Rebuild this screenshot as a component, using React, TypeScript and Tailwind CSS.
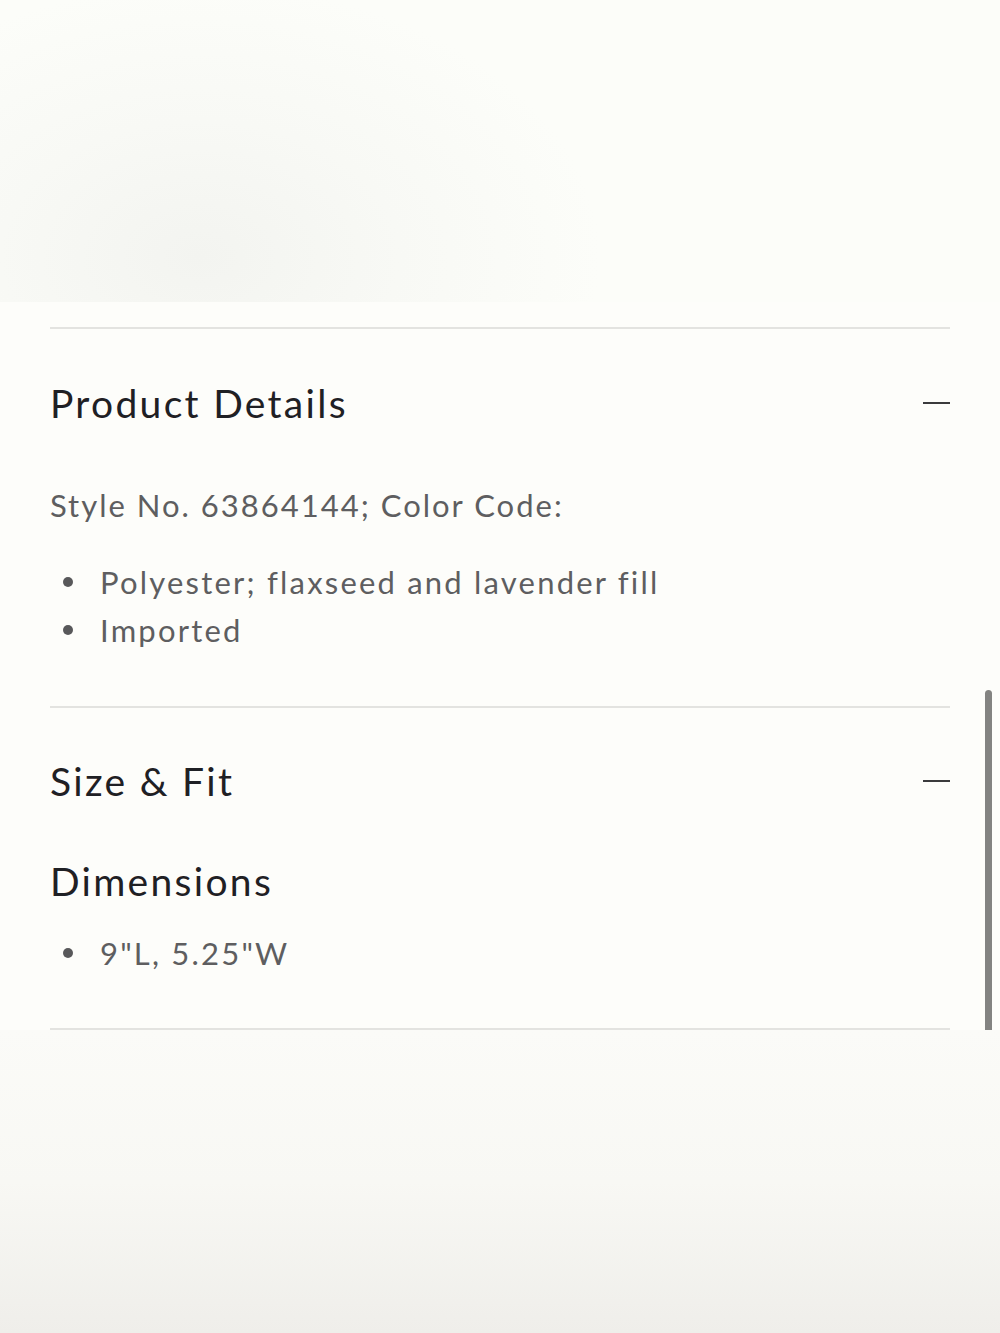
const details = ["Polyester; flaxseed and lavender fill", "Imported"];
const dims = ['9"L, 5.25"W'];

function Bullets({ items }: { items: string[] }) {
  return (
    <ul className="flex flex-col">
      {items.map((item) => (
        <li key={item} className="flex items-center h-[48px]">
          <span className="w-[10px] h-[10px] rounded-full bg-[#58585a] ml-[13px] mr-[27px] shrink-0" />
          <span className="text-[31px] tracking-[2.2px] text-[#5e5e60]">{item}</span>
        </li>
      ))}
    </ul>
  );
}

function SectionHeader({ title, height }: { title: string; height: string }) {
  return (
    <div className={`flex items-center justify-between ${height}`}>
      <h2 className="text-[39px] tracking-[2.3px] text-[#1f2024]">{title}</h2>
      <span className="w-[27px] h-[2px] bg-[#3a3a3c]" />
    </div>
  );
}

export default function App() {
  return (
    <div className="w-[1000px] h-[1333px] flex flex-col font-['Lato','Liberation_Sans',sans-serif] bg-[#fcfdf9]">
      {/* blurred area above */}
      <div className="h-[302px] bg-[radial-gradient(ellipse_40%_90%_at_20%_85%,#f3f4f0_0%,#f8f9f5_50%,#fcfdf9_100%)]" />

      {/* accordion panel */}
      <div className="relative h-[728px] bg-[#fdfdfa] px-[50px] pt-[25px]">
        <div className="h-[2px] bg-[#e3e3e0]" />
        <SectionHeader title="Product Details" height="h-[148px]" />
        <p className="mt-[4px] h-[48px] leading-[48px] text-[31px] tracking-[2px] text-[#5e5e60]">
          Style No. 63864144; Color Code:
        </p>
        <div className="mt-[29px]">
          <Bullets items={details} />
        </div>
        <div className="mt-[52px] h-[2px] bg-[#e3e3e0]" />
        <SectionHeader title="Size & Fit" height="h-[146px]" />
        <h3 className="mt-[3px] h-[48px] leading-[48px] text-[39px] tracking-[2.3px] text-[#1f2024]">
          Dimensions
        </h3>
        <div className="mt-[24px]">
          <Bullets items={dims} />
        </div>
        <div className="mt-[51px] h-[2px] bg-[#e3e3e0]" />

        {/* scrollbar thumb */}
        <div className="absolute right-[8px] top-[388px] bottom-0 w-[7px] rounded-t-full bg-[#838381]" />
      </div>

      {/* blurred area below */}
      <div className="flex-1 bg-[linear-gradient(to_bottom,#fbfbf8_0%,#f8f8f4_50%,#efeeea_100%)]" />
    </div>
  );
}
